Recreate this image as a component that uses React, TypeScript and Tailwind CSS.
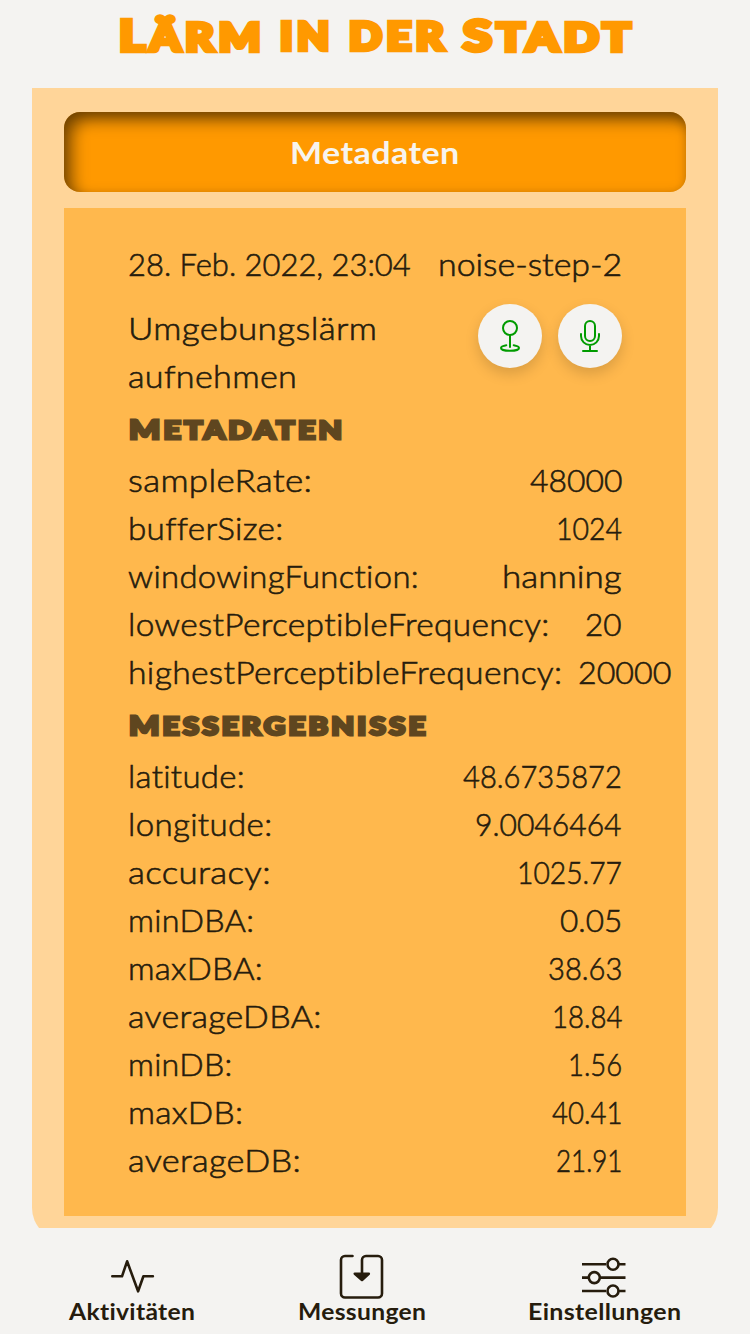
import { useLayoutEffect, useRef, type ReactNode } from 'react';

type FitProps = { width: number; className?: string; children: ReactNode };

/* Sets a run of text to an exact width by stretching its glyphs. */
function Fit({ width, className = '', children }: FitProps) {
  const ref = useRef<HTMLSpanElement>(null);
  useLayoutEffect(() => {
    const el = ref.current;
    if (!el) return;
    el.style.transform = `scaleX(${width / el.offsetWidth})`;
  }, [width]);
  return (
    <span className={`block shrink-0 text-left whitespace-nowrap ${className}`} style={{ width }}>
      <span ref={ref} className="inline-block origin-left">{children}</span>
    </span>
  );
}

type Entry = [string, number, string, number];

const metadata: Entry[] = [
  ['sampleRate:', 184, '48000', 92],
  ['bufferSize:', 155, '1024', 66],
  ['windowingFunction:', 291, 'hanning', 120],
  ['lowestPerceptibleFrequency:', 422, '20', 37],
  ['highestPerceptibleFrequency:', 435, '20000', 93],
];

const results: Entry[] = [
  ['latitude:', 117, '48.6735872', 159],
  ['longitude:', 144, '9.0046464', 147],
  ['accuracy:', 143, '1025.77', 105],
  ['minDBA:', 126, '0.05', 62],
  ['maxDBA:', 135, '38.63', 74],
  ['averageDBA:', 194, '18.84', 70],
  ['minDB:', 105, '1.56', 54],
  ['maxDB:', 115, '40.41', 70],
  ['averageDB:', 173, '21.91', 66],
];

function Rows({ items }: { items: Entry[] }) {
  return (
    <dl>
      {items.map(([name, nameWidth, value, valueWidth]) => (
        <div key={name} className="flex h-12 justify-between gap-[15px]">
          <dt><Fit width={nameWidth} className="tracking-[0.3px]">{name}</Fit></dt>
          <dd><Fit width={valueWidth}>{value}</Fit></dd>
        </div>
      ))}
    </dl>
  );
}

function Heading({ width, first, rest }: { width: number; first: string; rest: string }) {
  return (
    <h2 className="flex h-14 items-center pt-[3px] pl-px text-[24px] leading-[48px] font-black tracking-[2.6px] text-[#5f461f] [-webkit-text-stroke:2.8px_#5f461f]">
      <Fit width={width}>
        <span className="text-[26px]">{first}</span>
        <span className="uppercase">{rest}</span>
      </Fit>
    </h2>
  );
}

function PinIcon() {
  return (
    <svg className="size-8" viewBox="0 0 32 32" fill="none" stroke="#009b00" strokeWidth="2" strokeLinecap="round">
      <circle cx="16" cy="8" r="7" />
      <path d="M16 15v12M12.3 25.2c-2.2.4-5.3 1.2-5.3 2.7 0 1.7 4 2.9 9 2.9s9-1.2 9-2.9c0-1.5-3.1-2.3-5.3-2.7" />
    </svg>
  );
}

function MicIcon() {
  return (
    <svg className="size-8" viewBox="0 0 32 32" fill="none" stroke="#009b00" strokeWidth="2" strokeLinecap="round">
      <rect x="11" y="1" width="10" height="20" rx="5" />
      <path d="M7 14v2a9 9 0 0 0 18 0v-2M16 25v6M9 31h14" />
    </svg>
  );
}

function NavItem({ label, width, children }: { label: string; width: number; children: ReactNode }) {
  return (
    <a className="flex flex-col items-center">
      <svg className="mr-0.5 h-12 w-12" viewBox="0 0 48 48" fill="none" stroke="#261c0d" strokeWidth="2.6" strokeLinecap="round" strokeLinejoin="round">
        {children}
      </svg>
      <Fit width={width} className="-mt-[5px] text-[23.5px] leading-8 font-bold tracking-[0.3px]">{label}</Fit>
    </a>
  );
}

export default function App() {
  return (
    <div className="flex h-[1334px] w-[750px] flex-col overflow-hidden bg-[#f4f3f1] font-['Lato','Open_Sans',sans-serif] text-[#261c0d]">
      <h1 className="flex h-[88px] shrink-0 gap-[15px] pl-[119px] text-[37px] leading-[71px] font-black tracking-[4px] text-[#ff9900] [-webkit-text-stroke:4.5px_#ff9900]">
        <Fit width={146}><span className="text-[42px]">L</span><span className="uppercase">ärm</span></Fit>
        <Fit width={54}><span className="uppercase">in</span></Fit>
        <Fit width={99}><span className="uppercase">der</span></Fit>
        <Fit width={173}><span className="text-[42px]">S</span><span className="uppercase">tadt</span></Fit>
      </h1>
      <main className="h-[1140px] shrink-0 overflow-hidden px-8">
        <div className="h-[1152px] rounded-b-[32px] bg-[#ffd599] px-8 pt-6">
          <button className="flex h-20 w-full items-center justify-center rounded-2xl bg-[#ff9900] text-[31px] font-bold text-[#f7f4ee] shadow-[inset_8px_8px_16px_rgba(0,0,0,0.5),inset_0_4px_8px_rgba(0,0,0,0.15)]">
            <Fit width={170} className="tracking-[0.4px]">Metadaten</Fit>
          </button>
          <section className="mt-4 h-[1008px] bg-[#ffb84d] px-16 py-8 text-[31.5px] leading-[48px] font-light [-webkit-text-stroke:0.6px_#261c0d]">
            <div className="flex h-16 justify-between">
              <Fit width={283}>28. Feb. 2022, 23:04</Fit>
              <Fit width={184}>noise-step-2</Fit>
            </div>
            <div className="flex h-24 justify-between">
              <div>
                <Fit width={249} className="tracking-[0.3px]">Umgebungslärm</Fit>
                <Fit width={169} className="tracking-[0.3px]">aufnehmen</Fit>
              </div>
              <div className="flex gap-4">
                <span className="flex size-16 items-center justify-center rounded-full bg-[#f4f3f1] shadow-[0_6px_14px_rgba(0,0,0,0.15)]"><PinIcon /></span>
                <span className="flex size-16 items-center justify-center rounded-full bg-[#f4f3f1] shadow-[0_6px_14px_rgba(0,0,0,0.15)]"><MicIcon /></span>
              </div>
            </div>
            <Heading width={216} first="M" rest="etadaten" />
            <Rows items={metadata} />
            <Heading width={300} first="M" rest="essergebnisse" />
            <Rows items={results} />
          </section>
        </div>
      </main>
      <nav className="flex h-[106px] shrink-0 justify-between px-[69px] pt-6">
        <NavItem label="Aktivitäten" width={126}>
          <path d="M5.3 24.3h9.7L20.1 9.300l11 30 5.300-15h9.500" />
        </NavItem>
        <NavItem label="Messungen" width={128}>
          <path d="M15.500 4H8a4 4 0 0 0-4 4v33.500a4 4 0 0 0 4 4h33a4 4 0 0 0 4-4V8a4 4 0 0 0-4-4H29a4 4 0 0 0-4 4v16" />
          <path d="M17.800 21.700h14L25 28z" fill="#261c0d" />
        </NavItem>
        <NavItem label="Einstellungen" width={153}>
          <path strokeLinecap="butt" d="M2 12.300h24M38 12.300h7.500M2 25.600h7M20 25.600h25.500M2 39h24M38 39h7.500" />
          <circle cx="33" cy="12.300" r="5.500" />
          <circle cx="14.300" cy="25.600" r="5.500" />
          <circle cx="33" cy="39" r="5.500" />
        </NavItem>
      </nav>
    </div>
  );
}
